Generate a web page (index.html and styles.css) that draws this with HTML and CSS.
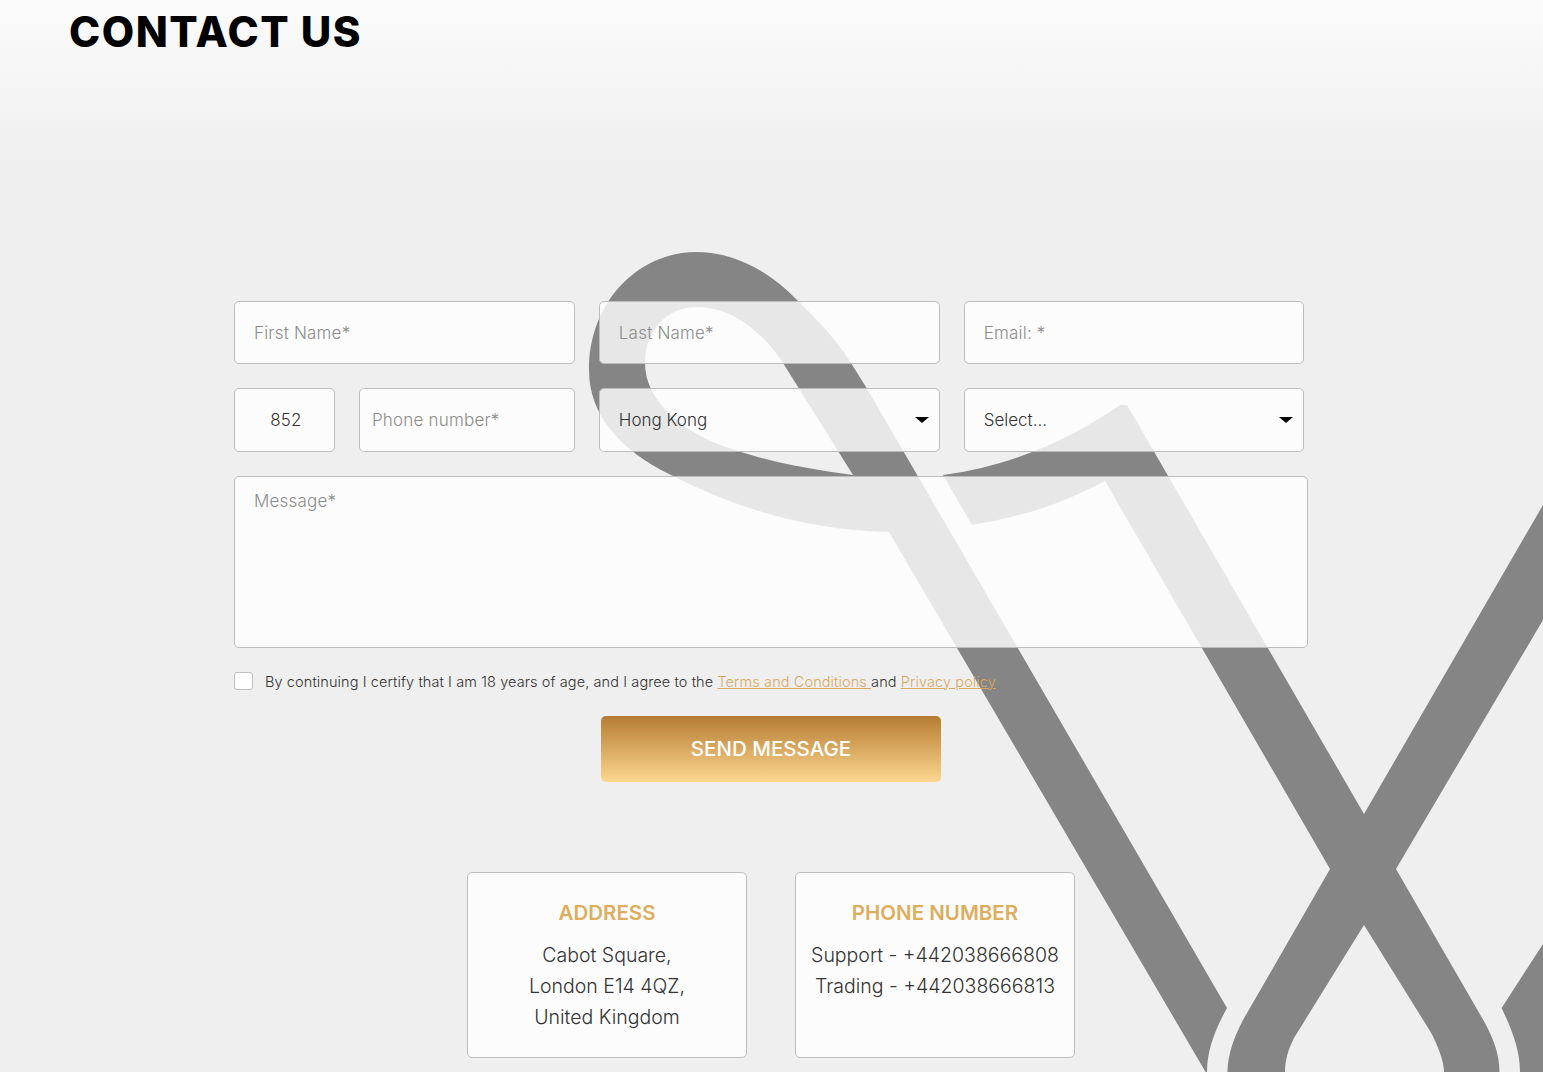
FILE: index.html
```html
<!DOCTYPE html>
<html>
<head>
    <title>Contact Us</title>
    <link rel="stylesheet" href="styles.css">
</head>
<body>
    <svg class="bg-logo" width="1543" height="1072" viewBox="0 0 1543 1072" aria-hidden="true">
        <path fill-rule="evenodd" d="M889 532C800 530 730 505 671 475C620 450 589 415 589 370C589 300 640 252 696 252C735 252 770 272 797 300C820 322 838 342 851 363L866 387L1227 1008C1215 1030 1207 1050 1207 1072L1205.6 1072ZM696 307C717 307 737 315 754 330C768 342 775 351 783 363L853 475C800 468 760 460 715 443C680 428 645 400 645 363C645 330 668 307 696 307Z"/>
        <path d="M943 475C1010 466 1070 440 1120 405L1127 405L1364 814L1543 505L1543 620L1396 869L1485 1023C1494 1040 1499.5 1055 1499.5 1072L1444 1072C1444 1062 1438 1045 1430 1031L1364 925L1294 1038C1288 1050 1285 1060 1285 1072L1227.5 1072C1227.5 1055 1234 1037 1243 1020L1330 869L1105 481C1060 505 1020 517 972 525Z"/>
        <path d="M1543 944L1501.6 1008C1512 1030 1520 1050 1520 1072L1543 1072Z"/>
    </svg>

    <h1 class="page-title">CONTACT US</h1>

    <main class="content">
        <form class="contact-form">
            <div class="form-row row-first">
                <input class="field" type="text" placeholder="First Name*">
                <input class="field" type="text" placeholder="Last Name*">
                <input class="field" type="email" placeholder="Email: *">
            </div>
            <div class="form-row row-second">
                <div class="phone-group">
                    <input class="field field-code" type="text" value="852">
                    <input class="field field-phone" type="text" placeholder="Phone number*">
                </div>
                <div class="select-wrap">
                    <select class="field field-select">
                        <option>Hong Kong</option>
                    </select>
                </div>
                <div class="select-wrap">
                    <select class="field field-select">
                        <option>Select...</option>
                    </select>
                </div>
            </div>
            <textarea class="field field-message" placeholder="Message*"></textarea>
            <label class="agree">
                <input class="agree-box" type="checkbox">
                <span>By continuing I certify that I am 18 years of age, and I agree to the <a href="#">Terms and Conditions </a>and <a href="#">Privacy policy</a></span>
            </label>
            <button class="send-btn" type="button">SEND MESSAGE</button>
        </form>

        <div class="info-cards">
            <div class="info-card">
                <h3>ADDRESS</h3>
                <p>Cabot Square,<br>London E14 4QZ,<br>United Kingdom</p>
            </div>
            <div class="info-card">
                <h3>PHONE NUMBER</h3>
                <p>Support - +442038666808<br>Trading - +442038666813</p>
            </div>
        </div>
    </main>
</body>
</html>
```
FILE: styles.css
```css
html, body { margin: 0; padding: 0; }
body { position: relative; height: 1072px; overflow: hidden; font-family: Inter, "Open Sans", sans-serif; font-weight: 300; color: #333; background: linear-gradient(#fbfbfb 0, #efefef 165px); }

.bg-logo { position: absolute; left: 0; top: 0; fill: #858585; }

.page-title { position: relative; margin: 0 0 0 69px; font-size: 42px; line-height: 64px; font-weight: 800; letter-spacing: 1.5px; color: #000; }

.content { position: relative; padding: 0 235px 0 234px; }
.contact-form { display: flex; flex-direction: column; margin-top: 237px; }

.form-row { display: flex; gap: 24px; width: 1070.5px; margin-bottom: 24px; }
.row-first { height: 63px; }
.row-second { height: 64px; }
.form-row > * { flex: 1 1 0; min-width: 0; }

.field { box-sizing: border-box; width: 100%; height: 100%; padding: 0 19px; border: 1px solid #bdbdbd; border-radius: 5px; background: rgba(255, 255, 255, 0.8); font-family: inherit; font-weight: 300; font-size: 17px; letter-spacing: 0.2px; color: #333; outline: none; }
.field::placeholder { color: #8c8c8c; opacity: 1; }

.phone-group { display: flex; gap: 24px; }
.field-code { flex: 0 0 101px; width: 101px; padding: 0 0 0 3px; text-align: center; }
.field-phone { flex: 1; padding: 0 12px; }

.select-wrap { position: relative; }
.select-wrap::after { content: ""; position: absolute; right: 11px; top: 29px; border-style: solid; border-width: 6px 7px 0; border-color: #000 transparent transparent; }
.field-select { appearance: none; -webkit-appearance: none; letter-spacing: 0; }

.field-message { display: block; width: 1074px; height: 172px; padding: 14px 19px; resize: none; }

.agree { display: flex; align-items: center; gap: 12px; height: 18px; margin-top: 24px; font-size: 14.5px; letter-spacing: 0.1px; color: #333; }
.agree-box { appearance: none; -webkit-appearance: none; box-sizing: border-box; flex: none; width: 19px; height: 18px; margin: 0; border: 1px solid #bdbdbd; border-radius: 3px; background: #fff; }
.agree a { color: #d9a860; text-decoration: underline; }

.send-btn { align-self: center; width: 340px; height: 66px; margin-top: 26px; padding: 0 0 2px; border: none; border-radius: 5px; background: linear-gradient(#b67c33, #fcd68f); color: #fff; font-family: inherit; font-size: 20.5px; font-weight: 500; }

.info-cards { display: flex; justify-content: center; gap: 48px; margin-top: 90px; }
.info-card { box-sizing: border-box; width: 280px; height: 186px; padding-top: 24px; border: 1px solid #bdbdbd; border-radius: 5px; background: rgba(255, 255, 255, 0.8); text-align: center; }
.info-card h3 { margin: 0 0 12px; font-size: 20.5px; line-height: 31px; font-weight: 600; color: #dcae5e; }
.info-card p { margin: 0; font-size: 19.5px; line-height: 31px; color: #333; }
```
